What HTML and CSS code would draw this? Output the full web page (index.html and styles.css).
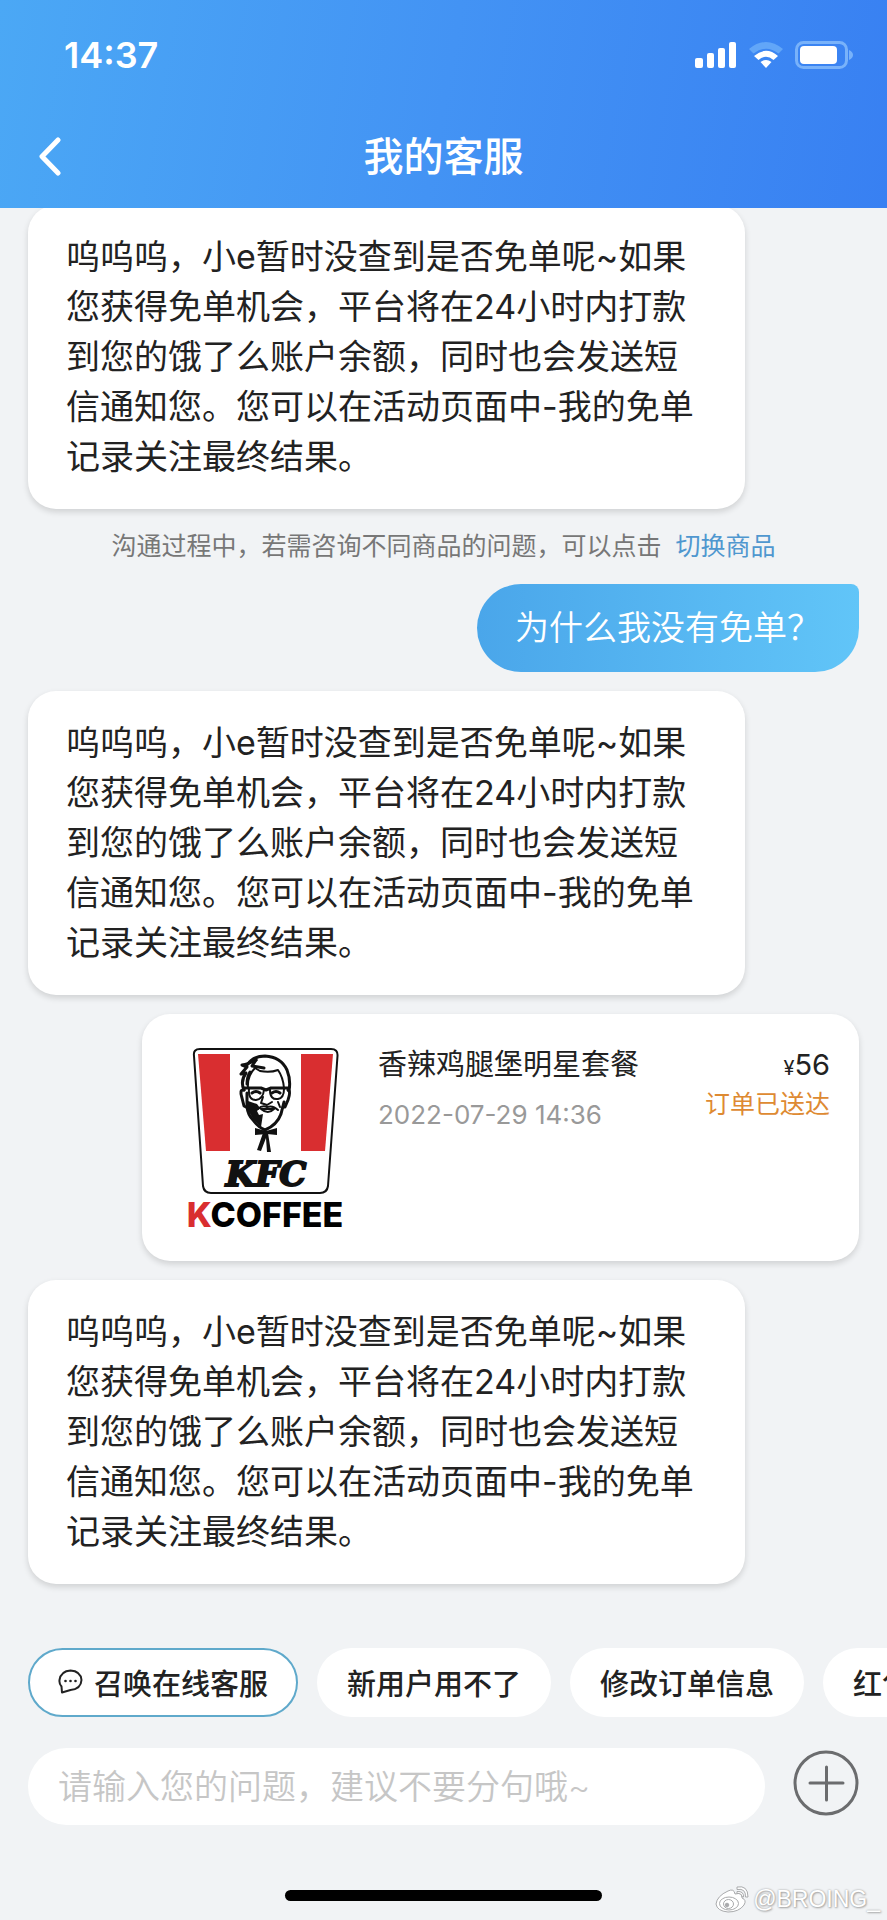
FILE: index.html
```html
<!DOCTYPE html>
<html lang="zh-CN">
<head>
  <meta charset="UTF-8" />
  <meta name="viewport" content="width=device-width, initial-scale=1.0" />
  <title>我的客服</title>
  <link rel="stylesheet" href="styles.css">
</head>
<body>
  <div class="app">
    <header class="header">
      <div class="status-bar">
        <span class="time">14:37</span>
        <div class="status-icons">
          <svg width="42" height="26" viewBox="0 0 42 26" fill="#fff">
            <rect x="0" y="16" width="8" height="10" rx="2"/>
            <rect x="12" y="11" width="7" height="15" rx="2"/>
            <rect x="23" y="6" width="7" height="20" rx="2"/>
            <rect x="34" y="0" width="7" height="26" rx="2"/>
          </svg>
          <svg width="34" height="26" viewBox="0 0 34 26">
            <path d="M0 7 Q17 -7 34 7 L29.500 11.500 Q17 2 4.500 11.500 Z" fill="#62a6f8"/>
            <path d="M5 14 Q17 3.500 29 14 L24.500 18 Q17 11.500 9.500 18 Z" fill="#fff"/>
            <path d="M11.500 20 Q17 16 22.500 20 L17 26 Z" fill="#fff"/>
          </svg>
          <svg width="58" height="28" viewBox="0 0 58 28">
            <rect x="1.500" y="1.500" width="50" height="25" rx="7" fill="none" stroke="#78b2fa" stroke-width="3"/>
            <rect x="5" y="5" width="37" height="18" rx="4" fill="#fff"/>
            <path d="M54 9 Q58 11 58 14 Q58 17 54 19 Z" fill="#78b2fa"/>
          </svg>
        </div>
      </div>
      <div class="nav">
        <button class="back" aria-label="返回">
          <svg width="24" height="40" viewBox="0 0 24 40" fill="none" stroke="#fff" stroke-width="5" stroke-linecap="round" stroke-linejoin="round">
            <path d="M20 3 L4 19.500 L20 36"/>
          </svg>
        </button>
        <h1>我的客服</h1>
      </div>
    </header>

    <main class="chat">
      <p class="bubble">呜呜呜，小e暂时没查到是否免单呢~如果您获得免单机会，平台将在24小时内打款到您的饿了么账户余额，同时也会发送短信通知您。您可以在活动页面中-我的免单记录关注最终结果。</p>
      <p class="tip">沟通过程中，若需咨询不同商品的问题，可以点击<a href="#">切换商品</a></p>
      <p class="bubble mine">为什么我没有免单？</p>
      <p class="bubble">呜呜呜，小e暂时没查到是否免单呢~如果您获得免单机会，平台将在24小时内打款到您的饿了么账户余额，同时也会发送短信通知您。您可以在活动页面中-我的免单记录关注最终结果。</p>

      <section class="order">
        <svg class="logo" width="160" height="188" viewBox="0 0 160 188">
          <path d="M14 2 H145 Q152 2 151.500 9 L142 139 Q141 146 134 146 H25 Q18 146 17 139 L8 9 Q7 2 14 2 Z" fill="#fff" stroke="#111" stroke-width="2"/>
          <path d="M12 7 H44 V104 H20 Z" fill="#d92e30"/>
          <path d="M115 7 H147 L139 104 H115 Z" fill="#d92e30"/>
          <g fill="none" stroke="#111" stroke-width="2" stroke-linecap="round" stroke-linejoin="round">
            <!-- hair -->
            <path d="M61 18 Q67 9 79 9 Q95 10 101 23 Q105 33 103 44" stroke-width="3"/>
            <path d="M70 13 Q62 17 56 18 L61 20 L55 27 L60 26 Q54 34 58 43" stroke-width="3"/>
            <path d="M62 41 Q61 29 69 21 L74 24 Q84 26 92 23 Q97 30 98 41"/>
            <path d="M70 13 L66 19 L78 21 M64 25 Q61 30 61 37" stroke-width="3"/>
            <!-- face -->
            <path d="M58 43 Q53 42 56 51 L58 59 L62 61" stroke-width="3"/>
            <path d="M102 43 Q105 44 102 53 L99 60 L97 60" stroke-width="3"/>
            <path d="M61 46 V60 Q62 68 67 73 Q72 80 79 83 Q91 78 95 67 L98 55" stroke-width="3"/>
            <!-- glasses and features -->
            <path d="M58 41 H75 L80 43 L85 41 H102" stroke-width="3"/>
            <path d="M63 42 Q62 53 70 53 Q77 52 78 43 M84 43 Q84 53 92 52 Q98 51 98 42"/>
            <path d="M66 46 Q70 43 74 46 M86 46 Q90 43 94 46" stroke-width="3"/>
            <path d="M77 50 L75 56 L81 58 L86 55"/>
            <path d="M72 62 Q76 58 81 60 Q87 58 92 63 M75 62 H88 Q82 68 75 62 M92 55 L94 60"/>
          </g>
          <path d="M62 54 L71 57 L74 61 L71 64 L73 68 L77 67 L75 80 L67 72 L62 63 Z" fill="#111"/>
          <!-- tie -->
          <path d="M69 81 L80 84 L91 81 V88 L81 87 L69 88 Z" fill="#111"/>
          <path d="M77 86 L71 103 L75 104 L80 91 L81 105 H85 L82 86 Z" fill="#111"/>
          <text class="kfc" x="80" y="139" text-anchor="middle">KFC</text>
          <text class="kcoffee" x="79" y="180" text-anchor="middle"><tspan fill="#d92e30">K</tspan>COFFEE</text>
        </svg>
        <div class="order-info">
          <h2>香辣鸡腿堡明星套餐</h2>
          <time>2022-07-29 14:36</time>
        </div>
        <div class="order-side">
          <span class="price"><small>¥</small>56</span>
          <span class="state">订单已送达</span>
        </div>
      </section>

      <p class="bubble">呜呜呜，小e暂时没查到是否免单呢~如果您获得免单机会，平台将在24小时内打款到您的饿了么账户余额，同时也会发送短信通知您。您可以在活动页面中-我的免单记录关注最终结果。</p>
    </main>

    <footer class="footer">
      <div class="chips">
        <button class="chip active">
          <svg width="25" height="25" viewBox="0 0 25 25">
            <path d="M3.500 17.500 Q1 14.500 1.500 11 Q3 2 12.500 1.500 Q22.500 2 23.500 11 Q23 20 12.500 21 L4 23.500 Z" fill="none" stroke="#222" stroke-width="2" stroke-linejoin="round"/>
            <circle cx="7.500" cy="12" r="1.300" fill="#222"/>
            <circle cx="12.500" cy="12" r="1.300" fill="#222"/>
            <circle cx="17.500" cy="12" r="1.300" fill="#222"/>
          </svg>
          召唤在线客服
        </button>
        <button class="chip">新用户用不了</button>
        <button class="chip">修改订单信息</button>
        <button class="chip">红包问题</button>
      </div>
      <div class="compose">
        <input type="text" aria-label="请输入您的问题" placeholder="请输入您的问题，建议不要分句哦~" />
        <button class="more" aria-label="更多">
          <svg width="66" height="66" viewBox="0 0 66 66" fill="none" stroke="#6b6c6e" stroke-width="3" stroke-linecap="round">
            <circle cx="33" cy="33" r="31"/>
            <path d="M17 33 H50 M33.500 17 V50"/>
          </svg>
        </button>
      </div>
      <div class="home-bar"></div>
    </footer>

    <div class="watermark">
      <svg width="34" height="28" viewBox="0 0 34 28" fill="#fff" stroke="#a9aaac" stroke-width="1">
        <path d="M13 6 Q19 3 20 9 Q28 7 27 13 Q32 15 29 20 Q24 27 13 27 Q2 26 1 19 Q2 11 13 6 Z"/>
        <ellipse cx="14" cy="18.500" rx="9.500" ry="6.500"/>
        <ellipse cx="13.500" cy="19" rx="5" ry="4.500"/>
        <circle cx="12" cy="20" r="1.800" fill="#a9aaac"/>
        <path d="M22 2 Q33 0 33 12 L30.500 12 Q31 3 22 4.500 Z"/>
        <path d="M22 6.500 Q29 6 28.500 12 L26.500 11.500 Q27 8 22 8.500 Z"/>
      </svg>
      <span>@BROING_</span>
    </div>
  </div>
</body>
</html>
```
FILE: styles.css
```css
* {
  box-sizing: border-box;
}
body {
  margin: 0;
  font-family: Inter, 'Noto Sans CJK SC', sans-serif;
  background: #f1f3f5;
  color: #222;
}
h1, h2, p {
  margin: 0;
}
button, input {
  font-family: inherit;
  border: none;
}
button {
  padding: 0;
  background: none;
  color: inherit;
  cursor: pointer;
}
svg {
  display: block;
  flex: none;
}
.app {
  position: relative;
  min-height: 100vh;
  overflow: hidden;
  display: flex;
  flex-direction: column;
}

/* header */
.header {
  position: relative;
  z-index: 1;
  height: 208px;
  padding: 33px 34px 0 38px;
  background: linear-gradient(100deg, #4ba8f5, #4393f4 50%, #3880f2);
  color: #fff;
}
.status-bar {
  display: flex;
  justify-content: space-between;
  align-items: center;
  height: 44px;
  padding-left: 26px;
}
.time {
  font-size: 36px;
  font-weight: 600;
}
.status-icons {
  display: flex;
  align-items: center;
  gap: 12px;
}
.nav {
  display: grid;
  grid-template-columns: 24px 1fr 28px;
  align-items: center;
  height: 60px;
  margin-top: 50px;
}
.nav h1 {
  font-size: 40px;
  font-weight: 500;
  line-height: 60px;
  text-align: center;
}

/* messages, scrolled a little under the header */
.chat {
  display: flex;
  flex-direction: column;
  gap: 19px;
  margin-top: -3px;
  padding: 0 28px;
}
.bubble {
  margin-right: 114px;
  padding: 27px 38px;
  border-radius: 28px;
  background: #fff;
  box-shadow: 0 3px 6px rgba(0, 0, 0, 0.14);
  font-size: 34px;
  line-height: 50px;
}
.bubble.mine {
  align-self: flex-end;
  margin-right: 0;
  padding: 19px 38px;
  border-radius: 44px 8px 44px 44px;
  background: linear-gradient(90deg, #4aa6ea, #61c5f8);
  box-shadow: none;
  color: #fff;
  font-weight: 350;
}
.tip {
  font-size: 25px;
  line-height: 37px;
  text-align: center;
  color: #777;
}
.tip a {
  margin-left: 14px;
  color: #4f97cf;
  text-decoration: none;
}

.order {
  display: flex;
  gap: 32px;
  min-height: 247px;
  margin-left: 114px;
  padding: 33px 29px 26px 44px;
  border-radius: 28px;
  background: #fff;
  box-shadow: 0 3px 6px rgba(0, 0, 0, 0.14);
}
.kfc {
  font: italic 700 34px 'DejaVu Serif', serif;
  fill: #111;
  stroke: #111;
  stroke-width: 2px;
}
.kcoffee {
  font: 800 34px Inter, sans-serif;
}
.order-info {
  flex: 1;
}
.order-info h2 {
  font-size: 29px;
  font-weight: 400;
  line-height: 36px;
}
.order-info time {
  display: block;
  margin-top: 14px;
  font-size: 26px;
  line-height: 36px;
  color: #999;
}
.order-side {
  display: flex;
  flex-direction: column;
  align-items: flex-end;
}
.price {
  font-size: 29px;
  line-height: 36px;
}
.price small {
  font-size: 20px;
}
.state {
  font-size: 25px;
  line-height: 36px;
  color: #de8a32;
}

/* bottom area */
.footer {
  display: flex;
  flex-direction: column;
  margin-top: auto;
  padding: 0 28px 19px;
}
.chips {
  display: flex;
  gap: 19px;
  margin-right: -28px;
  overflow: hidden;
}
.chip {
  display: flex;
  flex: none;
  align-items: center;
  gap: 11px;
  height: 69px;
  padding: 0 30px 2px;
  border-radius: 35px;
  background: #fff;
  font-size: 29px;
  font-weight: 500;
}
.chip.active {
  border: 2px solid #5fa9cb;
  padding: 0 28px 2px;
}
.compose {
  display: flex;
  align-items: flex-start;
  gap: 28px;
  margin-top: 31px;
}
.compose input {
  flex: 1;
  min-width: 0;
  height: 77px;
  padding: 0 30px;
  border-radius: 39px;
  background: #fff;
  font-size: 34px;
  font-weight: 350;
}
.compose input::placeholder {
  color: #c6c6c6;
  opacity: 1;
}
.more {
  display: flex;
  align-items: center;
  height: 70px;
}
.home-bar {
  align-self: center;
  width: 317px;
  height: 11px;
  margin-top: 65px;
  border-radius: 6px;
  background: #000;
}
.watermark {
  position: absolute;
  right: 7px;
  bottom: 6px;
  display: flex;
  align-items: center;
  gap: 4px;
  font-family: 'Liberation Sans', sans-serif;
  font-size: 23px;
  line-height: 30px;
  color: #fff;
  text-shadow: 0 0 2px #999, 1px 1px 2px #aaa;
}
```
